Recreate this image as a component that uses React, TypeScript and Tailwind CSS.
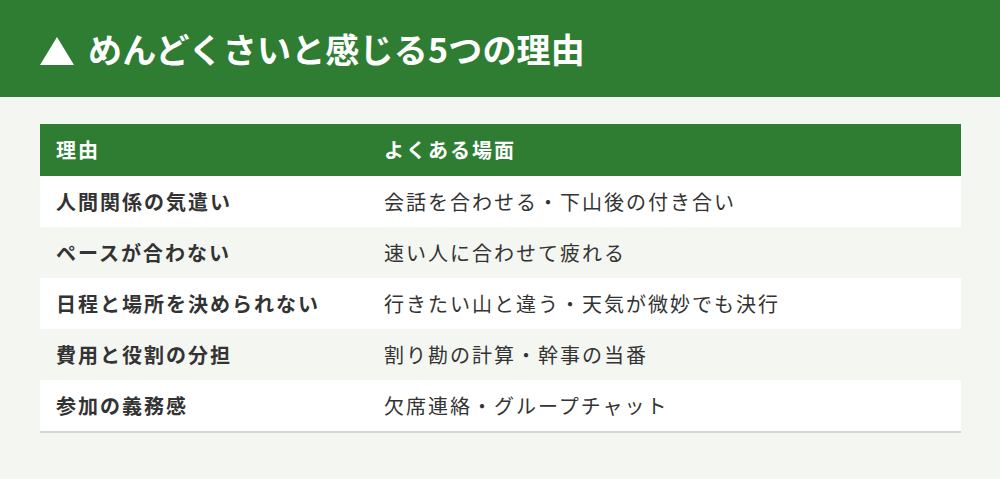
import React from "react";

const rows: [string, string][] = [
  ["人間関係の気遣い", "会話を合わせる・下山後の付き合い"],
  ["ペースが合わない", "速い人に合わせて疲れる"],
  ["日程と場所を決められない", "行きたい山と違う・天気が微妙でも決行"],
  ["費用と役割の分担", "割り勘の計算・幹事の当番"],
  ["参加の義務感", "欠席連絡・グループチャット"],
];

export default function App() {
  return (
    <div
      className="w-[1000px] h-[479px] bg-[#f4f6f1] text-[#333333]"
      style={{ fontFamily: '"Noto Sans CJK JP", "Noto Sans", sans-serif' }}
    >
      <div className="h-[97px] bg-[#2e7d32] flex items-center pl-[40px] gap-[14px]">
        <svg width="34" height="28" viewBox="0 0 34 28" className="mt-[4px]">
          <polygon points="17,0 34,28 0,28" fill="#ffffff" />
        </svg>
        <h1 className="text-white font-bold text-[34px] tracking-[0.2px] leading-none">
          めんどくさいと感じる5つの理由
        </h1>
      </div>
      <div className="mx-[40px] mt-[27px] w-[921px] border-b-2 border-[#d2d6cf]">
        <div className="grid grid-cols-[328px_1fr] h-[52px] bg-[#2e7d32] text-white font-bold text-[20px] tracking-[2px] items-center">
          <div className="pl-[16px]">理由</div>
          <div className="pl-[16px]">よくある場面</div>
        </div>
        {rows.map(([a, b], i) => (
          <div
            key={a}
            className={`grid grid-cols-[328px_1fr] h-[51px] items-center text-[20px] tracking-[2px] ${
              i % 2 === 0 ? "bg-white" : "bg-[#f4f6f1]"
            }`}
          >
            <div className="pl-[16px] font-bold">{a}</div>
            <div className="pl-[16px]">{b}</div>
          </div>
        ))}
      </div>
    </div>
  );
}
